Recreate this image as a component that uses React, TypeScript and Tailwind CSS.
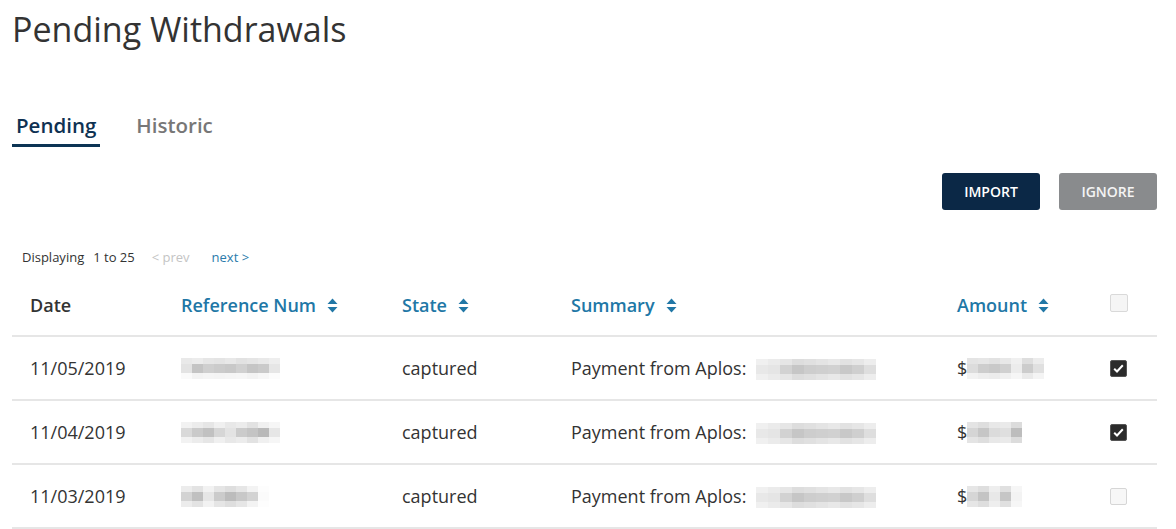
import React from "react";

const font = { fontFamily: '"Open Sans", "Noto Sans", sans-serif' };

function SortIcon() {
  return (
    <svg width="11" height="15" viewBox="0 0 11 15" className="ml-[11px] inline-block">
      <path d="M5.5 0.5 L10.5 6 L0.5 6 Z" fill="currentColor" />
      <path d="M5.5 14.5 L10.5 9 L0.5 9 Z" fill="currentColor" />
    </svg>
  );
}

function Blur({ cells, w = 11 }: { cells: string[][]; w?: number }) {
  return (
    <div className="inline-flex flex-col align-middle">
      {cells.map((row, i) => (
        <div key={i} className="flex">
          {row.map((c, j) => (
            <div key={j} style={{ width: w, height: i === 1 ? 9 : 6, background: c }} />
          ))}
        </div>
      ))}
    </div>
  );
}

const refBlurs: string[][][] = [
  [
    ["#e9e9e9", "#ececec", "#e6e6e6", "#e4e4e4", "#e8e8e8", "#e2e2e2", "#e5e5e5", "#e9e9e9", "#eeeeee"],
    ["#e3e3e3", "#c4c4c4", "#cfcfcf", "#cbcbcb", "#c8c8c8", "#d0d0d0", "#c5c5c5", "#cacaca", "#e6e6e6"],
    ["#fafafa", "#f3f3f3", "#f5f5f5", "#f4f4f4", "#f5f5f5", "#f6f6f6", "#f3f3f3", "#f7f7f7", "#fcfcfc"],
  ],
  [
    ["#f2f2f2", "#ececec", "#e6e6e6", "#f0f0f0", "#e8e8e8", "#ececec", "#e2e2e2", "#f0f0f0", "#f6f6f6"],
    ["#d9d9d9", "#cacaca", "#c1c1c1", "#d6d6d6", "#e3e3e3", "#cbcbcb", "#c4c4c4", "#b9b9b9", "#e6e6e6"],
    ["#f2f2f2", "#ececec", "#e6e6e6", "#f0f0f0", "#e8e8e8", "#ececec", "#e2e2e2", "#f0f0f0", "#f6f6f6"],
  ],
  [
    ["#ececec", "#e3e3e3", "#f2f2f2", "#e5e5e5", "#dedede", "#e6e6e6", "#f3f3f3", "#fdfdfd"],
    ["#d3d3d3", "#c0c0c0", "#e6e6e6", "#cbcbcb", "#bcbcbc", "#c8c8c8", "#d3d3d3", "#fbfbfb"],
    ["#ececec", "#e3e3e3", "#f2f2f2", "#e5e5e5", "#dedede", "#e6e6e6", "#f3f3f3", "#fdfdfd"],
  ],
];

const sumBlur: string[][] = [
  ["#f0f0f0", "#ebebeb", "#e6e6e6", "#dddddd", "#e0e0e0", "#e4e4e4", "#e8e8e8", "#e2e2e2", "#e6e6e6", "#ededed"],
  ["#e8e8e8", "#e5e5e5", "#d2d2d2", "#c6c6c6", "#cdcdcd", "#cfcfcf", "#d1d1d1", "#c8c8c8", "#cfcfcf", "#dedede"],
  ["#f0f0f0", "#ebebeb", "#e6e6e6", "#dddddd", "#e0e0e0", "#e4e4e4", "#e8e8e8", "#e2e2e2", "#e6e6e6", "#ededed"],
];

const amtBlurs: string[][][] = [
  [
    ["#e4e4e4", "#e6e6e6", "#e2e2e2", "#e8e8e8", "#f0f0f0", "#dedede", "#ececec"],
    ["#dcdcdc", "#cdcdcd", "#c9c9c9", "#d0d0d0", "#ececec", "#cccccc", "#e0e0e0"],
    ["#f2f2f2", "#eeeeee", "#ececec", "#f0f0f0", "#f6f6f6", "#eaeaea", "#f4f4f4"],
  ],
  [
    ["#e4e4e4", "#dedede", "#e8e8e8", "#eaeaea", "#dcdcdc", "#ffffff"],
    ["#d5d5d5", "#c6c6c6", "#dbdbdb", "#dfdfdf", "#bdbdbd", "#ffffff"],
    ["#e4e4e4", "#dedede", "#e8e8e8", "#eaeaea", "#dcdcdc", "#ffffff"],
  ],
  [
    ["#e6e6e6", "#dedede", "#eeeeee", "#e0e0e0", "#f6f6f6", "#ffffff"],
    ["#d6d6d6", "#c4c4c4", "#e8e8e8", "#c6c6c6", "#f3f3f3", "#ffffff"],
    ["#e6e6e6", "#dedede", "#eeeeee", "#e0e0e0", "#f6f6f6", "#ffffff"],
  ],
];

function Checkbox({ checked }: { checked: boolean }) {
  if (checked)
    return (
      <div className="w-[17px] h-[17px] rounded-[2px] bg-[#2b2b2b] border border-[#555] flex items-center justify-center">
        <svg width="11" height="9" viewBox="0 0 11 9">
          <path d="M1.2 4.8 L4 7.5 L9.8 1.3" stroke="#fff" strokeWidth="2" fill="none" />
        </svg>
      </div>
    );
  return <div className="w-[17px] h-[17px] rounded-[2px] border border-[#d6d6d6] bg-[#f7f7f7]" />;
}

const rows = [
  { date: "11/05/2019", checked: true },
  { date: "11/04/2019", checked: true },
  { date: "11/03/2019", checked: false },
];

const grid = "grid grid-cols-[151px_221px_169px_386px_153px_1fr] items-center pl-[18px]";

export default function App() {
  return (
    <div className="bg-white w-[1176px] h-[529px] overflow-hidden pl-[12px] pr-[19px]" style={font}>
      <h1 className="text-[34px] leading-[46px] text-[#333333] pt-[6px] font-normal">Pending Withdrawals</h1>

      <div className="flex mt-[59px] items-end">
        <div className="border-b-[3px] border-[#0c3454] px-[4px] pb-[5px]">
          <span className="text-[20.5px] leading-[28px] font-semibold text-[#0e3152]">Pending</span>
        </div>
        <div className="ml-[36px] pb-[8px]">
          <span className="text-[20.5px] leading-[28px] font-semibold text-[#777777]">Historic</span>
        </div>
      </div>

      <div className="flex justify-end gap-[19px] mt-[26px]">
        <button className="w-[98px] h-[37px] rounded-[3px] bg-[#0b2846] text-white text-[14px] font-semibold">IMPORT</button>
        <button className="w-[98px] h-[37px] rounded-[3px] bg-[#898b8d] text-[#f4f4f4] text-[14px] font-semibold">IGNORE</button>
      </div>

      <div className="flex items-center mt-[38px] pl-[10px] text-[13px] leading-[18px]">
        <span className="text-[#333]">Displaying</span>
        <span className="ml-[9px] text-[#333]">1 to 25</span>
        <span className="ml-[17px] text-[#c4c4c4]">&lt; prev</span>
        <span className="ml-[22px] text-[#2a7bab]">next &gt;</span>
      </div>

      <div className={grid + " h-[62px] border-b-2 border-[#e6e6e6] text-[18px] font-semibold mt-[9px]"}>
        <div className="text-[#333333]">Date</div>
        <div className="text-[#2177a6] flex items-center">Reference Num<SortIcon /></div>
        <div className="text-[#2177a6] flex items-center">State<SortIcon /></div>
        <div className="text-[#2177a6] flex items-center">Summary<SortIcon /></div>
        <div className="text-[#2177a6] flex items-center">Amount<SortIcon /></div>
        <div className="pb-[4px]"><div className="w-[18px] h-[18px] rounded-[2px] border border-[#d9d9d9] bg-[#f5f5f5]" /></div>
      </div>

      {rows.map((r, i) => (
        <div key={i} className={grid + " h-[64px] border-b-2 border-[#e6e6e6] text-[18px] text-[#333333]"}>
          <div>{r.date}</div>
          <div className="flex items-center"><Blur cells={refBlurs[i]} /></div>
          <div>captured</div>
          <div className="flex items-center">Payment from Aplos:<span className="ml-[10px]"><Blur cells={sumBlur} w={12} /></span></div>
          <div className="flex items-center">$<Blur cells={amtBlurs[i]} w={11} /></div>
          <div><Checkbox checked={r.checked} /></div>
        </div>
      ))}
    </div>
  );
}
